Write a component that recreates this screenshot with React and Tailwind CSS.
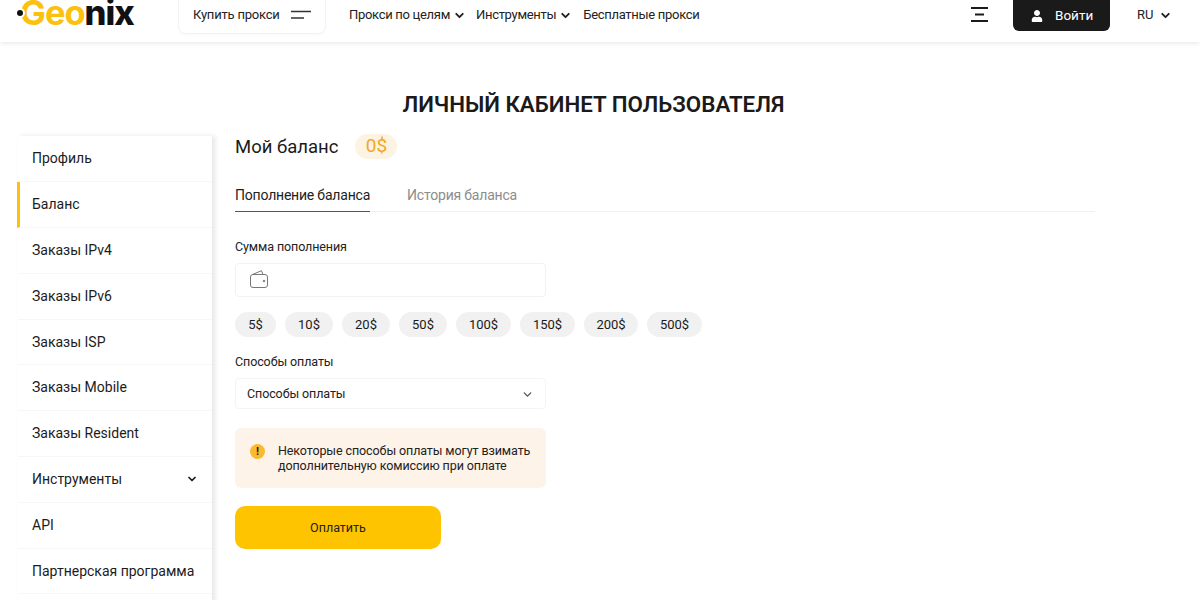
import React from 'react';
import { ChevronDown } from 'lucide-react';
import { FaUser } from 'react-icons/fa';

const sideItems = ['Профиль', 'Баланс', 'Заказы IPv4', 'Заказы IPv6', 'Заказы ISP', 'Заказы Mobile', 'Заказы Resident', 'Инструменты', 'API', 'Партнерская программа'];
const amounts = [
  ['5$', 'w-[41px]'],
  ['10$', 'w-[48px]'],
  ['20$', 'w-[48px]'],
  ['50$', 'w-[48px]'],
  ['100$', 'w-[55px]'],
  ['150$', 'w-[55px]'],
  ['200$', 'w-[54px]'],
  ['500$', 'w-[55px]'],
];

function Header() {
  return (
    <header className="h-[42px] bg-white shadow-[0_1px_5px_rgba(0,0,0,0.10)] flex items-start relative z-10">
      {/* Brand */}
      <div className="w-[178px] h-[42px] overflow-hidden relative shrink-0">
        <div className="ml-[20px] -mt-[7px] text-[34.5px] leading-[40px] font-bold tracking-[-1px] whitespace-nowrap font-['Inter',sans-serif]">
          <span className="text-[#fcc10f]">Geo</span><span className="text-[#111] font-extrabold">nix</span>
        </div>
        <span className="absolute left-[17px] top-[10px] w-[6px] h-[6px] rounded-full bg-[#111] ring-2 ring-white"></span>
      </div>

      <div className="w-[148px] h-[34px] pb-[3px] rounded-b-lg border border-t-0 border-[#f3f3f3] shadow-[0_1px_3px_rgba(0,0,0,0.03)] flex items-center pl-[14px] gap-[11px] text-[13px] tracking-[-0.2px] text-[#222]">
        <span>Купить прокси</span>
        <svg width="20" height="10" viewBox="0 0 20 10" fill="none">
          <path d="M0 1.5h20M0 8h13" stroke="#333" strokeWidth="1.5" />
        </svg>
      </div>

      {/* Navigation */}
      <nav className="flex items-center h-[30px] ml-[23px] text-[13px] tracking-[-0.3px] text-[#222]">
        <span>Прокси по целям</span>
        <ChevronDown size={13} strokeWidth={3.5} className="ml-[3px] mr-[10px]" />
        <span>Инструменты</span>
        <ChevronDown size={13} strokeWidth={3.5} className="ml-[3px] mr-[11px]" />
        <span>Бесплатные прокси</span>
      </nav>

      <div className="ml-auto flex items-start">
        <svg width="18" height="15" viewBox="0 0 18 15" fill="none" className="mt-[7px] mr-[24px]">
          <path d="M0 1h17M4 7.5h9M0 14h17" stroke="#1b1b1b" strokeWidth="2" />
        </svg>
        <button className="w-[97px] h-[31px] rounded-b-md bg-[#1a1a1a] text-white text-[13.5px] flex items-center pl-[18px] gap-[12px]">
          <FaUser size={12} />
          <span>Войти</span>
        </button>
        <div className="flex items-center h-[30px] w-[90px] pl-[27px] text-[13px] text-[#222] gap-[6px]">
          <span>RU</span>
          <ChevronDown size={13} strokeWidth={3.5} />
        </div>
      </div>
    </header>
  );
}

function Sidebar() {
  return (
    <aside className="w-[194px] h-[500px] ml-[18px] shrink-0 bg-white shadow-[3px_0_5px_rgba(0,0,0,0.10)] text-[14px] text-[#1c1c1c] pt-[0.5px]">
      {sideItems.map((item) => (
        <div
          key={item}
          className={
            'h-[45.8px] flex items-center justify-between pr-[14px] border-b border-[#f7f7f7] ' +
            (item === 'Баланс' ? 'border-l-[3px] border-l-[#fcc10f] -ml-px pl-[12px]' : 'pl-[14px]')
          }
        >
          <span className="whitespace-nowrap">{item}</span>
          {item === 'Инструменты' && <ChevronDown size={12} strokeWidth={3.5} />}
        </div>
      ))}
    </aside>
  );
}

function Balance() {
  return (
    <main className="ml-[23px] w-[860px]">
      <div className="flex items-center h-[25px] -mt-[2px] gap-[17px]">
        <h2 className="text-[18.5px] text-[#1a1a1a] pt-[2px]">Мой баланс</h2>
        <span className="w-[42px] h-[25px] rounded-full bg-[#fdf3e3] text-[#f5a623] text-[19px] flex items-center justify-center">0$</span>
      </div>

      {/* Tabs */}
      <div className="flex gap-[37px] mt-[16px] border-b border-[#f0f0f0] text-[14px] tracking-[-0.2px] h-[37px]">
        <div className="text-[#222] border-b border-[#555] h-[37px] pt-[10px]">Пополнение баланса</div>
        <div className="text-[#8c8c8c] pt-[10px]">История баланса</div>
      </div>

      <div className="w-[311px]">
        <div className="text-[12.5px] tracking-[-0.1px] text-[#222] mt-[26px] leading-[18px]">Сумма пополнения</div>
        <div className="h-[34px] mt-[7px] border border-[#f2f2f2] rounded-sm flex items-center pl-[14px] pb-[2px]">
          <svg width="18" height="18" viewBox="0 0 18 18" fill="none" stroke="#777" strokeWidth="1">
            <rect x="0.5" y="4.5" width="17" height="13" rx="2.5" />
            <path d="M2.5 4.5L11.5 0.7L13 4.5" />
            <circle cx="14" cy="11" r="0.8" fill="#777" />
          </svg>
        </div>
      </div>

      <div className="flex gap-[9px] mt-[15px] text-[13px] text-[#1a1a1a]">
        {amounts.map(([label, width]) => (
          <span key={label} className={'h-[25px] rounded-full bg-[#f1f1f1] flex items-center justify-center ' + width}>{label}</span>
        ))}
      </div>

      <div className="w-[311px]">
        <div className="text-[12.5px] tracking-[-0.1px] text-[#222] mt-[16px] leading-[18px]">Способы оплаты</div>
        <div className="h-[31px] mt-[7px] pt-[1px] rounded-sm border border-[#f4f4f4] flex items-center justify-between pl-[11px] pr-[11px] text-[12.5px] tracking-[-0.1px] text-[#222]">
          <span>Способы оплаты</span>
          <ChevronDown size={13} strokeWidth={2.5} className="text-[#555]" />
        </div>

        <div className="h-[60px] mt-[19px] rounded-md bg-[#fdf3e8] flex items-start pl-[15px] pt-[15px] gap-[13px] text-[12.5px] tracking-[-0.1px] leading-[15px] text-[#222]">
          <span className="w-[15px] h-[15px] mt-px rounded-full bg-[#fbb92f] text-[#222] text-[11px] font-bold flex items-center justify-center shrink-0">!</span>
          <p className="whitespace-nowrap">Некоторые способы оплаты могут взимать<br />дополнительную комиссию при оплате</p>
        </div>
      </div>

      <button className="block w-[206px] h-[43px] mt-[18px] pt-[1px] rounded-[10px] bg-[#ffc400] text-[12.5px] text-[#222]">Оплатить</button>
    </main>
  );
}

export default function App() {
  return (
    <div className="h-[600px] overflow-hidden bg-white font-['Roboto','Noto_Sans',sans-serif]">
      <Header />
      <h1 className="mt-[50px] h-[44px] pr-[13px] text-center text-[22.3px] leading-[24px] font-semibold text-[#1a1a1a]">ЛИЧНЫЙ КАБИНЕТ ПОЛЬЗОВАТЕЛЯ</h1>
      <div className="flex">
        <Sidebar />
        <Balance />
      </div>
    </div>
  );
}
